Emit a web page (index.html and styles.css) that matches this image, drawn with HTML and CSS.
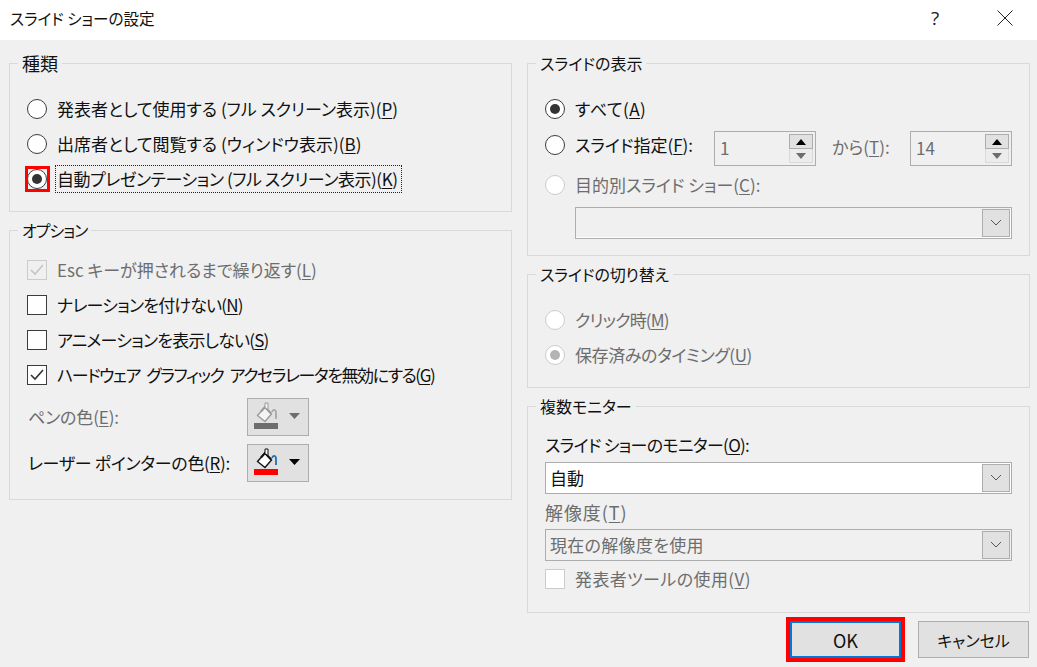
FILE: index.html
```html
<!DOCTYPE html>
<html lang="ja">
<head>
<meta charset="utf-8">
<title>スライド ショーの設定</title>
<link rel="stylesheet" href="styles.css">
</head>
<body>
<div class="dialog">
  <header class="titlebar">
    <span class="title">スライド ショーの設定</span>
    <span class="help">?</span>
    <svg class="close" width="16" height="16" viewBox="0 0 16 16"><path d="M.5.5l15 15M15.500.5l-15 15" stroke="#222" stroke-width="1" fill="none"/></svg>
  </header>
  <main class="content">
    <div class="column">
      <section class="group g-type">
        <div class="legend big">種類</div>
        <div class="row"><span class="radio"></span><span>発表者として使用する (フル スクリーン表示)(<u>P</u>)</span></div>
        <div class="row"><span class="radio"></span><span>出席者として閲覧する (ウィンドウ表示)(<u>B</u>)</span></div>
        <div class="row"><span class="radio on marked"></span><span class="focus ls-s">自動プレゼンテーション (フル スクリーン表示)(<u>K</u>)</span></div>
      </section>
      <section class="group g-options">
        <div class="legend ls-l">オプション</div>
        <div class="row dis"><span class="check off"><svg width="18" height="18" viewBox="0 0 18 18"><path d="M3 9l4 4 8-9" stroke="#c4c4c4" stroke-width="1.600" fill="none"/></svg></span><span>Esc キーが押されるまで繰り返す(<u>L</u>)</span></div>
        <div class="row"><span class="check"></span><span class="ls-m">ナレーションを付けない(<u>N</u>)</span></div>
        <div class="row"><span class="check"></span><span class="ls-m">アニメーションを表示しない(<u>S</u>)</span></div>
        <div class="row"><span class="check"><svg width="18" height="18" viewBox="0 0 18 18"><path d="M3 9l4 4 8-9" stroke="#333" stroke-width="1.600" fill="none"/></svg></span><span class="ls-w">ハードウェア グラフィック アクセラレータを無効にする(<u>G</u>)</span></div>
        <div class="color-row first dis">
          <span class="color-label"><span class="ls-t">ペンの色(<u>E</u>):</span></span>
          <span class="color-btn">
            <svg width="60" height="36" viewBox="0 0 60 36"><path d="M9.500 16.500L17 8l6.500 7L17 22.500z" fill="#f4f4f4" stroke="#9a9a9a" stroke-width="1.400"/><path d="M13 12.500l4-4.500 6 6.500" stroke="#9a9a9a" stroke-width="2" fill="none"/><path d="M17 8V4h3v6" stroke="#9a9a9a" fill="#f4f4f4"/><path d="M24 13c1-3 4-3 4 1v6" stroke="#a8a8a8" stroke-width="1.800" fill="none"/><rect x="6" y="24" width="24" height="6" fill="#6d6d6d"/><path d="M41 14h11l-5.500 6z" fill="#6d6d6d"/></svg>
          </span>
        </div>
        <div class="color-row">
          <span class="color-label"><span class="ls-xs">レーザー ポインターの色(<u>R</u>):</span></span>
          <span class="color-btn">
            <svg width="60" height="36" viewBox="0 0 60 36"><path d="M9.500 16.500L17 8l6.500 7L17 22.500z" fill="#fff" stroke="#111" stroke-width="1.400"/><path d="M13 12.500l4-4.500 6 6.500" stroke="#111" stroke-width="2" fill="none"/><path d="M17 8V4h3v6" stroke="#111" fill="#fff"/><path d="M24 13c1-3 4-3 4 1v6" stroke="#1e6fb8" stroke-width="1.800" fill="none"/><rect x="6" y="24" width="24" height="6" fill="#f00"/><path d="M41 14h11l-5.500 6z" fill="#000"/></svg>
          </span>
        </div>
      </section>
    </div>
    <div class="column">
      <section class="group g-show">
        <div class="legend">スライドの表示</div>
        <div class="row"><span class="radio on"></span><span class="ls-p">すべて(<u>A</u>)</span></div>
        <div class="row range">
          <span class="radio"></span>
          <span class="range-label">スライド指定(<u>F</u>):</span>
          <span class="spin"><span class="spin-value">1</span><span class="spin-btns"><span class="spin-up"></span><span class="spin-down"></span></span></span>
          <span class="to-label dis">から(<u>T</u>):</span>
          <span class="spin"><span class="spin-value">14</span><span class="spin-btns"><span class="spin-up"></span><span class="spin-down"></span></span></span>
        </div>
        <div class="row dis custom"><span class="radio off"></span><span>目的別スライド ショー(<u>C</u>):</span></div>
        <div class="combo blank indent"><span class="combo-value"></span><span class="combo-btn"><svg width="12" height="8" viewBox="0 0 12 8"><path d="M1 1l5 5 5-5" stroke="#555" fill="none"/></svg></span></div>
      </section>
      <section class="group g-switch">
        <div class="legend ls-t">スライドの切り替え</div>
        <div class="row dis"><span class="radio off"></span><span class="ls-m">クリック時(<u>M</u>)</span></div>
        <div class="row dis"><span class="radio on off"></span><span class="ls-n">保存済みのタイミング(<u>U</u>)</span></div>
      </section>
      <section class="group g-monitor">
        <div class="legend">複数モニター</div>
        <div class="label ls-o">スライド ショーのモニター(<u>O</u>):</div>
        <div class="combo active"><span class="combo-value">自動</span><span class="combo-btn"><svg width="12" height="8" viewBox="0 0 12 8"><path d="M1 1l5 5 5-5" stroke="#555" fill="none"/></svg></span></div>
        <div class="label dis second big ls-k">解像度(<u>T</u>)</div>
        <div class="combo dis"><span class="combo-value ls-q">現在の解像度を使用</span><span class="combo-btn"><svg width="12" height="8" viewBox="0 0 12 8"><path d="M1 1l5 5 5-5" stroke="#555" fill="none"/></svg></span></div>
        <div class="row dis presenter"><span class="check off"></span><span class="ls-r">発表者ツールの使用(<u>V</u>)</span></div>
      </section>
      <footer class="actions">
        <button class="btn default">OK</button>
        <button class="btn">キャンセル</button>
      </footer>
    </div>
  </main>
</div>
</body>
</html>
```
FILE: styles.css
```css
*, *::before, *::after { box-sizing: border-box; }
html, body { margin: 0; padding: 0; }
body {
  font-family: "Noto Sans CJK JP", "Noto Sans", sans-serif;
  font-size: 17px;
  line-height: 22px;
  font-feature-settings: "palt";
  color: #111;
  background: #f0f0f0;
}
.dialog { width: 1037px; height: 667px; overflow: hidden; display: flex; flex-direction: column; }
.titlebar { height: 40px; flex: none; background: #fff; display: flex; align-items: center; padding: 0 0 4px 10px; }
.title { flex: 1; font-size: 15.6px; }
.help { width: 14px; text-align: center; margin-right: 55px; color: #222; font-family: "Open Sans", sans-serif; font-size: 19px; }
.close { margin-right: 24px; }
.content { flex: 1; display: flex; gap: 15px; padding: 23px 0 0 9px; }
.column { width: 503px; display: flex; flex-direction: column; }
.group { border: 1px solid #d9d9d9; padding: 0 12px 0 0; }
.g-type { height: 149px; margin-bottom: 18px; }
.g-options { height: 270px; }
.g-show { height: 193px; margin-bottom: 18px; }
.g-switch { height: 114px; margin-bottom: 18px; }
.g-monitor { height: 207px; padding-left: 17px; padding-right: 17px; }
.legend { width: fit-content; height: 22px; margin: -12px 0 17px 8px; padding: 0 4px; background: #f0f0f0; font-size: 16px; }
.legend.big { font-size: 18px; }
.g-options .legend { margin-bottom: 11px; }
.g-monitor .legend { margin-left: -9px; }
.row { height: 35px; display: flex; align-items: center; gap: 10px; padding-left: 17px; }
.dis { color: #6d6d6d; }
u { text-underline-offset: 2px; }
.ls-xs { letter-spacing: -0.3px; }
.ls-s { letter-spacing: -0.45px; }
.ls-n { letter-spacing: -0.4px; }
.ls-o { letter-spacing: -0.7px; }
.ls-m { letter-spacing: -0.8px; }
.ls-l { letter-spacing: -1px; }
.ls-w { letter-spacing: -1.45px; word-spacing: 4px; }
.ls-t { letter-spacing: -0.15px; }
.ls-p { letter-spacing: 0.5px; }
.ls-q { letter-spacing: 0.3px; }
.ls-r { letter-spacing: 0.4px; }
.ls-k { letter-spacing: 0.9px; }
.radio { width: 20px; height: 20px; flex: none; border: 1px solid #3c3c3c; border-radius: 50%; background: #fff; position: relative; display: flex; align-items: center; justify-content: center; }
.radio.on::before { content: ""; width: 10px; height: 10px; border-radius: 50%; background: #333; }
.radio.off { border-color: #ccc; }
.radio.on.off::before { background: #b4b4b4; }
.radio.marked::after { content: ""; position: absolute; left: -3px; top: -4px; width: 25px; height: 26px; border: 3px solid #f00; }
.focus { display: block; border: 1px dotted #222; height: 28px; line-height: 26px; margin-left: -2px; padding: 0 3px 0 1px; }
.check { width: 20px; height: 20px; flex: none; border: 1px solid #3c3c3c; background: #fff; display: flex; align-items: center; justify-content: center; }
.check.off { border-color: #ccc; }
.g-options .row.dis .check { background: #f0f0f0; }
.color-row { height: 38px; display: flex; align-items: center; padding-left: 18px; margin-top: 8px; }
.color-row.first { margin-top: 6px; }
.color-label { width: 219px; }
.color-btn { width: 62px; height: 38px; border: 1px solid #adadad; background: #e1e1e1; display: block; }
.color-btn svg { display: block; }
.range { height: 38px; margin-top: 2px; align-items: flex-start; padding-top: 7px; }
.range-label { width: 129px; margin-top: -1px; }
.range .spin { margin-top: -4px; }
.to-label { width: 68px; margin-left: 6px; margin-top: 1px; }
.spin { width: 102px; height: 35px; flex: none; border: 1px solid #adadad; display: flex; color: #6d6d6d; }
.spin-value { flex: 1; padding: 5px 0 0 5px; }
.spin-btns { width: 24px; margin: 2px 2px 2px 0; display: flex; flex-direction: column; }
.spin-up, .spin-down { flex: 1; display: flex; align-items: center; justify-content: center; border: 1px solid #adadad; background: #e1e1e1; }
.spin-down { border-color: #d9d9d9; background: #ececec; border-top: 0; }
.spin-up::before { content: ""; border: 5px solid transparent; border-top: 0; border-bottom: 6px solid #000; }
.spin-down::before { content: ""; border: 5px solid transparent; border-bottom: 0; border-top: 6px solid #6d6d6d; }
.custom { margin-top: 1px; }
.combo { height: 32px; border: 1px solid #adadad; display: flex; padding: 1px; }
.indent { margin: 5px 5px 0 47px; }
.combo.blank { box-shadow: inset -1px -1px 0 #fff; }
.combo.active { background: #fff; }
.combo-value { flex: 1; padding-left: 3px; line-height: 28px; }
.combo-btn { width: 28px; border: 1px solid #adadad; background: #e1e1e1; display: flex; align-items: center; justify-content: center; }
.label { height: 22px; margin-bottom: 6px; }
.label.second { margin-top: 7px; }
.label.big { font-size: 18px; }
.g-monitor .row { padding-left: 0; height: 36px; }
.actions { display: flex; justify-content: flex-end; gap: 17px; padding: 8px 1px 0 0; }
.btn { width: 111px; height: 37px; border: 1px solid #adadad; background: #e1e1e1; font: inherit; font-size: 16px; color: #111; padding: 0; }
.btn.default { border: 2px solid #0078d7; outline: 4px solid #f00; font-size: 18px; }
```
